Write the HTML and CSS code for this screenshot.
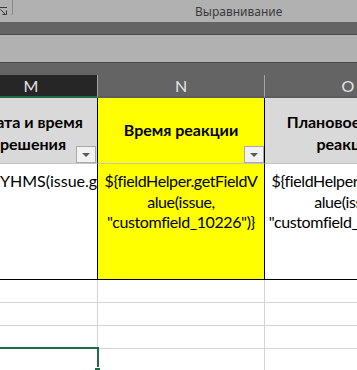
FILE: index.html
```html
<!DOCTYPE html>
<html lang="ru">

<head>
    <meta charset="UTF-8">
    <meta name="viewport" content="width=device-width, initial-scale=1.0">
    <title>Отчёт по заявкам</title>
    <link rel="stylesheet" href="styles.css">
</head>

<body>
    <div class="ribbon">
        <div class="launcher">
            <svg width="9" height="9" viewBox="0 0 9 9">
                <path d="M0 0.5 H8" stroke="#3a3a3a" fill="none" />
                <path d="M1.5 2.5 L7 8" stroke="#3a3a3a" fill="none" />
                <path d="M3.5 7.5 H7.5 V3.5" stroke="#3a3a3a" fill="none" />
            </svg>
        </div>
        <div class="group-label">Выравнивание</div>
    </div>
    <div class="ribbon-edge"></div>
    <div class="formula-bar"></div>

    <div class="sheet">
        <div class="col-heads">
            <div class="col-head selected">M</div>
            <div class="col-head">N</div>
            <div class="col-head">O</div>
        </div>

        <div class="row head-row">
            <div class="cell two-lines">
                <span>Дата и время<br>решения</span>
                <span class="filter"><svg width="8" height="4" viewBox="0 0 8 4"><path d="M0 0 H8 L4 4 Z" fill="#595959" /></svg></span>
            </div>
            <div class="cell marked">
                <span>Время реакции</span>
                <span class="filter"><svg width="8" height="4" viewBox="0 0 8 4"><path d="M0 0 H8 L4 4 Z" fill="#595959" /></svg></span>
            </div>
            <div class="cell two-lines">
                <span>Плановое время<br>реакции</span>
            </div>
        </div>

        <div class="row data-row">
            <div class="cell single">${dateHelper.formatDMYHMS(issue.getResolutionDate())}</div>
            <div class="cell marked">${fieldHelper.getFieldV<br>alue(issue,<br>"customfield_10226")}</div>
            <div class="cell">${fieldHelper.getFieldV<br>alue(issue,<br>"customfield_10227",1)}</div>
        </div>

        <div class="row empty-row">
            <div class="cell"></div>
            <div class="cell"></div>
            <div class="cell"></div>
        </div>
        <div class="row empty-row">
            <div class="cell"></div>
            <div class="cell"></div>
            <div class="cell"></div>
        </div>
        <div class="row empty-row">
            <div class="cell"></div>
            <div class="cell"></div>
            <div class="cell"></div>
        </div>
        <div class="row empty-row">
            <div class="cell active"></div>
            <div class="cell"></div>
            <div class="cell"></div>
        </div>
    </div>
</body>

</html>
```

FILE: styles.css
```css
body {
    margin: 0;
    width: 357px;
    height: 370px;
    overflow: hidden;
    background-color: #fff;
    font-family: Lato, "Liberation Sans", sans-serif;
}

/* top of the window (ribbon, formula bar) */
.ribbon {
    height: 22px;
    background-color: #b1b1b1;
    display: flex;
    align-items: flex-start;
}

.launcher {
    width: 12px;
    height: 15px;
    border-right: 1px solid #8a8a8a;
    overflow: hidden;
}

.launcher svg {
    margin: 7px 0 0 -1px;
    display: block;
}

.group-label {
    margin-left: 182px;
    padding-top: 3px;
    font-family: "Noto Sans", sans-serif;
    font-size: 12px;
    color: #3a3a3a;
}

.ribbon-edge {
    height: 12px;
    background-color: #646464;
    border-bottom: 1px solid #4a4a4a;
}

.formula-bar {
    height: 27px;
    background-color: #b1b1b1;
    border-bottom: 1px solid #4a4a4a;
}

/* sheet grid */
.sheet {
    margin-left: -35px;
    background-color: #646464;
    padding-top: 12px;
}

.col-heads,
.row {
    display: grid;
    grid-template-columns: 133px 167px 167px;
}

.col-head {
    height: 21px;
    border-right: 1px solid #a3a3a3;
    border-bottom: 2px solid #5c5c5c;
    color: #e4e4e4;
    font-size: 16px;
    line-height: 21px;
    text-align: center;
}

.col-head.selected {
    background-color: #262626;
    border-bottom-color: #1f6e43;
}

.row {
    background-color: #fff;
}

.cell {
    border-right: 1px solid #d4d4d4;
    border-bottom: 1px solid #d4d4d4;
    box-sizing: border-box;
    position: relative;
}

.head-row .cell {
    height: 66px;
    background-color: #d9d9d9;
    border-bottom-color: #c4c4c4;
    border-right-color: #000;
    display: flex;
    align-items: center;
    justify-content: center;
    text-align: center;
    font-weight: bold;
    font-size: 16px;
    line-height: 22.5px;
    color: #000;
    white-space: nowrap;
}

.head-row .two-lines {
    padding-top: 5px;
}

.head-row .cell:first-child {
    padding-left: 4px;
}

.head-row .marked,
.data-row .marked {
    background-color: #ffff00;
}

.filter {
    position: absolute;
    right: 0;
    bottom: 0;
    width: 18px;
    height: 15px;
    border: 1px solid #a9a9a9;
    background-color: #f2f2f2;
    display: flex;
    align-items: center;
    justify-content: center;
}

.head-row .cell:first-child .filter {
    right: 1px;
}

.data-row .cell {
    height: 116px;
    border-right-color: #000;
    border-bottom-color: #000;
    padding-top: 7px;
    font-size: 16px;
    letter-spacing: -0.4px;
    line-height: 20.5px;
    color: #000;
    text-align: center;
    white-space: nowrap;
    overflow: hidden;
}

.data-row .cell:last-child {
    border-right-color: #d4d4d4;
}

.data-row .single {
    text-align: left;
    letter-spacing: 0;
    text-indent: -134px;
}

.empty-row .cell {
    height: 23px;
}

/* selected cell with fill handle */
.active::after {
    content: "";
    position: absolute;
    top: -2px;
    left: 0;
    right: -2px;
    height: 40px;
    border-top: 2px solid #1f6e43;
    border-right: 2px solid #1f6e43;
}

.active::before {
    content: "";
    position: absolute;
    right: -4px;
    top: 18px;
    width: 5px;
    height: 5px;
    background-color: #1f6e43;
    border: 1px solid #fff;
    z-index: 1;
}
```
